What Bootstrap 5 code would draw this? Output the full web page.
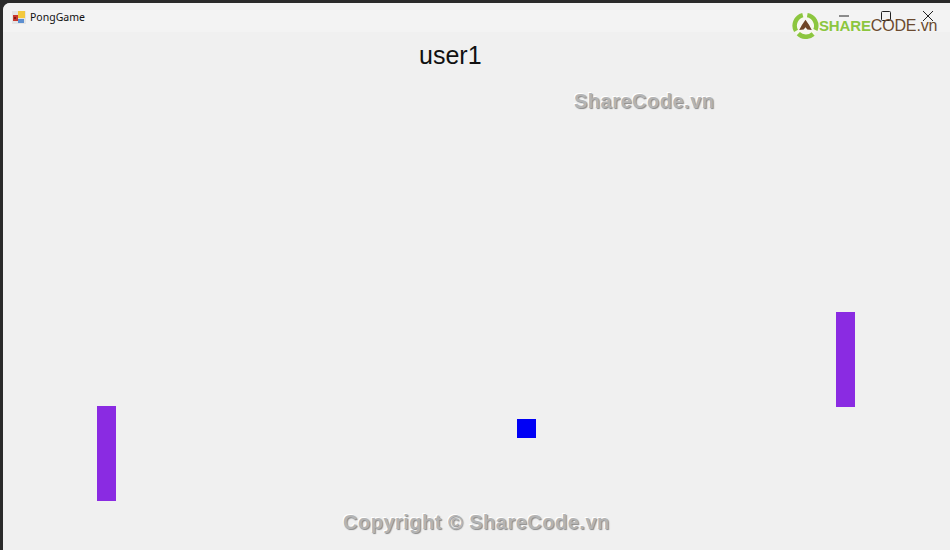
<!DOCTYPE html>
<html lang="en">
<head>
  <meta charset="UTF-8" />
  <meta name="viewport" content="width=device-width, initial-scale=1.0"/>
  <title>PongGame</title>
  <link href="https://cdn.jsdelivr.net/npm/bootstrap@5.3.3/dist/css/bootstrap.min.css" rel="stylesheet">
  <style>
    html, body { height: 100%; }
    body { background: #2b2b2b; padding: 3px 0 0 3px; overflow: hidden; }
    .app-window { width: 947px; height: 547px; background: #f0f0f0; border-top-left-radius: 7px; position: relative; overflow: hidden; }
    .title-bar { height: 29px; background: #f3f3f3; padding-left: 9px; padding-bottom: 2px; }
    .title-text { font: 10.5px "Noto Sans", sans-serif; color: #111; }
    .win-btns { gap: 32px; padding-right: 17px; padding-bottom: 1px; }
    .game-area { position: relative; height: 518px; }
    .player-name { font: 25px "Liberation Sans", sans-serif; color: #111; line-height: 30px; position: absolute; left: 416px; top: 8px; }
    .paddle { position: absolute; width: 19px; height: 95px; background: #8a2be2; }
    .paddle-left { left: 94px; top: 374px; }
    .paddle-right { left: 833px; top: 280px; }
    .ball { position: absolute; left: 514px; top: 387px; width: 19px; height: 19px; background: #0000f5; }
    .watermark { position: absolute; font: bold 20px "Liberation Sans", sans-serif; letter-spacing: .5px; color: #b4b4b4; text-shadow: 1px 1px 1px #8a8a8a, -1px -1px 0 #fff; white-space: nowrap; line-height: 24px; }
    .wm-top { left: 571px; top: 57px; }
    .wm-bottom { left: 340px; top: 478px; }
    .brand-logo { position: absolute; left: 789px; top: 9px; }
    .brand-text { font: 16px "Liberation Sans", sans-serif; line-height: 27px; letter-spacing: -.15px; color: #6b4a2f; white-space: nowrap; }
    .brand-text b { color: #8cc63f; font-size: 15px; font-weight: 700; }
  </style>
</head>
<body>
<div class="app-window">
  <!-- Title bar -->
  <div class="title-bar d-flex align-items-center justify-content-between">
    <div class="d-flex align-items-center gap-1">
      <svg width="14" height="14" viewBox="0 0 14 14">
        <rect x="0" y="1" width="14" height="13" fill="#e4e4e4"/>
        <rect x="1" y="5" width="5" height="6" fill="#c8392f"/>
        <rect x="2" y="7" width="2" height="2" fill="#7a1c16"/>
        <rect x="6" y="1" width="7" height="7" fill="#f3c93f"/>
        <rect x="6" y="9" width="6" height="4" fill="#5d8fd0"/>
      </svg>
      <span class="title-text">PongGame</span>
    </div>
    <div class="win-btns d-flex align-items-center">
      <svg width="10" height="10" viewBox="0 0 10 10"><path d="M0 5H10" stroke="#222"/></svg>
      <svg width="10" height="10" viewBox="0 0 10 10"><rect x=".5" y=".5" width="9" height="9" rx="1" fill="none" stroke="#222"/></svg>
      <svg width="10" height="10" viewBox="0 0 10 10"><path d="M0 0L10 10M10 0L0 10" stroke="#222"/></svg>
    </div>
  </div>

  <!-- Game -->
  <div class="game-area">
    <div class="player-name">user1</div>
    <div class="paddle paddle-left"></div>
    <div class="paddle paddle-right"></div>
    <div class="ball"></div>
    <div class="watermark wm-top">ShareCode.vn</div>
    <div class="watermark wm-bottom">Copyright © ShareCode.vn</div>
  </div>

  <!-- Logo over the title bar -->
  <div class="brand-logo d-flex align-items-center">
    <svg width="27" height="27" viewBox="0 0 30 30">
      <circle cx="15" cy="15" r="14" fill="#f7f7f0"/>
      <g fill="none" stroke="#8cc63f" stroke-width="5">
        <path d="M4.500 21A12 12 0 0 1 12 3.500"/>
        <path d="M17 3.500A12 12 0 0 1 26 20"/>
        <path d="M23.500 24.500A12 12 0 0 1 7 24"/>
      </g>
      <path d="M15 8.500L19 14.500L22 20L17 19.500L15 17L13 19.500L8 20L11 14.500Z" fill="#6e4526"/>
    </svg>
    <span class="brand-text"><b>SHARE</b>CODE.vn</span>
  </div>
</div>
</body>
</html>
